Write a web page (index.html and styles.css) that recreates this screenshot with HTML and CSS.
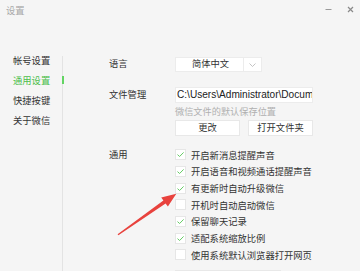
FILE: index.html
```html
<!DOCTYPE html>
<html lang="zh-CN">
<head>
    <meta charset="UTF-8">
    <title>设置</title>
    <link rel="stylesheet" href="styles.css">
</head>
<body>

<div class="window">
    <div class="titlebar">
        <span class="title">设置</span>
        <div class="controls">
            <svg class="ctl" width="7" height="7" viewBox="0 0 7 7"><path d="M0.5 3.5H6.5" stroke="#9a9a9a" stroke-width="1"/></svg>
            <svg class="ctl" width="7" height="7" viewBox="0 0 7 7"><path d="M1 1L6 6M6 1L1 6" stroke="#8a8a8a" stroke-width="1.2"/></svg>
        </div>
    </div>

    <div class="main">
        <ul class="nav">
            <li>帐号设置</li>
            <li class="active">通用设置</li>
            <li>快捷按键</li>
            <li>关于微信</li>
        </ul>

        <div class="content">
            <div class="row lang-row">
                <div class="label">语言</div>
                <div class="select">
                    <span class="select-value">简体中文</span>
                    <span class="select-arrow">
                        <svg width="7" height="4" viewBox="0 0 7 4"><path d="M0.5 0.5L3.5 3.5L6.5 0.5" fill="none" stroke="#b5b5b5" stroke-width="0.8"/></svg>
                    </span>
                </div>
            </div>

            <div class="row file-row">
                <div class="label">文件管理</div>
                <div class="field">
                    <div class="path">C:\Users\Administrator\Docum</div>
                    <div class="hint">微信文件的默认保存位置</div>
                    <div class="buttons">
                        <button class="btn">更改</button>
                        <button class="btn">打开文件夹</button>
                    </div>
                </div>
            </div>

            <div class="row general-row">
                <div class="label">通用</div>
                <div class="field">
                    <div class="check on"><span class="box"></span>开启新消息提醒声音</div>
                    <div class="check on"><span class="box"></span>开启语音和视频通话提醒声音</div>
                    <div class="check on"><span class="box"></span>有更新时自动升级微信</div>
                    <div class="check"><span class="box"></span>开机时自动启动微信</div>
                    <div class="check on"><span class="box"></span>保留聊天记录</div>
                    <div class="check on"><span class="box"></span>适配系统缩放比例</div>
                    <div class="check"><span class="box"></span>使用系统默认浏览器打开网页</div>
                    <div class="btn wide"></div>
                </div>
            </div>
        </div>
    </div>

    <svg class="arrow" width="360" height="271" viewBox="0 0 360 271">
        <polygon points="117.6,234.2 163.4,200.6 161.2,197.4 176.3,193.8 167.9,206.6 165.6,203.4 118.4,235.2" fill="#e8423d"/>
    </svg>
</div>

</body>
</html>
```

FILE: styles.css
```css
* {
    box-sizing: border-box;
}
body {
    margin: 0;
    background-color: #f5f5f5;
    font-family: "Liberation Sans", "Noto Sans CJK SC", sans-serif;
    font-size: 9.3px;
    color: #333;
}
.window {
    position: relative;
    width: 360px;
    height: 271px;
    overflow: hidden;
}
.titlebar {
    display: flex;
    justify-content: space-between;
    align-items: center;
    height: 22px;
    padding: 0 6px 0 6px;
}
.title {
    color: #a8a8a8;
    line-height: 10px;
}
.controls {
    display: flex;
    gap: 15px;
    align-items: center;
    margin-top: -3px;
}
.ctl {
    display: block;
}
.main {
    display: flex;
    margin-top: 34px;
    height: 215px;
}
.nav {
    list-style: none;
    margin: 0;
    padding: 0 0 0 13px;
    width: 63px;
    border-right: 1px solid #e3e3e3;
}
.nav li {
    position: relative;
    line-height: 10px;
    height: 10px;
    margin-bottom: 10px;
    white-space: nowrap;
}
.nav li.active {
    color: #4cbf4c;
}
.nav li.active::after {
    content: "";
    position: absolute;
    right: -2px;
    top: 0;
    width: 2px;
    height: 8px;
    background: #62d462;
}
.content {
    flex: 1;
    padding-left: 46px;
}
.row {
    display: flex;
}
.label {
    width: 66px;
    flex-shrink: 0;
    white-space: nowrap;
    color: #333;
}
.field {
    display: flex;
    flex-direction: column;
    align-items: flex-start;
}
.lang-row {
    margin-top: 1px;
}
.lang-row .label {
    line-height: 15px;
}
.select {
    display: flex;
    height: 15px;
    width: 87px;
    background: #fff;
    border: 1px solid #ececec;
}
.select-value {
    width: 67px;
    text-align: center;
    line-height: 13px;
    padding-left: 2px;
}
.select-arrow {
    flex: 1;
    border-left: 1px solid #ececec;
    display: flex;
    align-items: center;
    justify-content: center;
}
.select-arrow svg {
    display: block;
}
.file-row {
    margin-top: 15px;
}
.file-row .label {
    line-height: 16px;
}
.path {
    width: 138px;
    height: 16px;
    background: #fff;
    border: 1px solid #ececec;
    padding-left: 1px;
    font-size: 10.1px;
    line-height: 14px;
    white-space: nowrap;
    overflow: hidden;
    color: #222;
}
.hint {
    margin-top: 4px;
    line-height: 10px;
    font-size: 9.2px;
    color: #b0b0b0;
    white-space: nowrap;
}
.buttons {
    display: flex;
    gap: 8px;
    margin-top: 3px;
}
.btn {
    width: 65px;
    height: 16px;
    padding: 0;
    background: #fff;
    border: 1px solid #e8e8e8;
    font-family: inherit;
    font-size: 9.3px;
    color: #333;
    line-height: 14px;
}
.btn.wide {
    width: 106px;
    margin-top: 7px;
}
.general-row {
    margin-top: 10.5px;
}
.general-row .label {
    line-height: 16.67px;
}
.check {
    display: flex;
    align-items: center;
    height: 16.67px;
    white-space: nowrap;
}
.box {
    width: 11px;
    height: 11px;
    background: #fff;
    border: 1px solid #e6e6e6;
    margin-right: 5px;
    flex-shrink: 0;
}
.check.on .box {
    background: #fff url("data:image/svg+xml,%3Csvg xmlns='http://www.w3.org/2000/svg' width='9' height='9' viewBox='0 0 9 9'%3E%3Cpath d='M1.5 4.6L3.6 6.5L7.6 2.4' fill='none' stroke='%2366cc66' stroke-width='1'/%3E%3C/svg%3E") center no-repeat;
}
.arrow {
    position: absolute;
    left: 0;
    top: 0;
    pointer-events: none;
}
```
